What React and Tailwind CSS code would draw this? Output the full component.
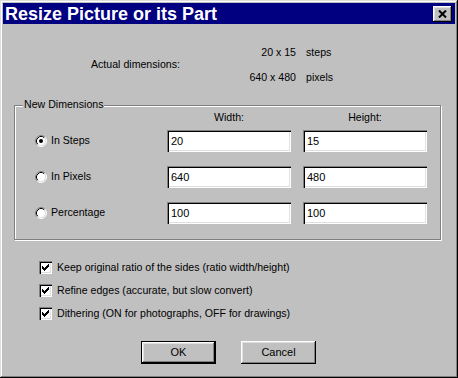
import React from 'react'

const font = { fontFamily: '"Liberation Sans", Arial, sans-serif' }

function Radio({ checked }) {
  // win95 style radio, 12x12
  return (
    <svg width="12" height="12" viewBox="0 0 12 12" className="shrink-0">
      <circle cx="6" cy="6" r="5" fill="#fff" />
      <path d="M2.11 9.89 A5.5 5.5 0 0 1 9.89 2.11" fill="none" stroke="#808080" strokeWidth="1" />
      <path d="M9.89 2.11 A5.5 5.5 0 0 1 2.11 9.89" fill="none" stroke="#fff" strokeWidth="1" />
      <path d="M2.82 9.18 A4.5 4.5 0 0 1 9.18 2.82" fill="none" stroke="#000" strokeWidth="1" />
      <path d="M9.18 2.82 A4.5 4.5 0 0 1 2.82 9.18" fill="none" stroke="#dfdfdf" strokeWidth="1" />
      {checked && <circle cx="6" cy="6" r="2" fill="#000" />}
    </svg>
  )
}

function Check() {
  const px = [
    [9, 3],
    [8, 4], [9, 4],
    [3, 5], [7, 5], [8, 5], [9, 5],
    [3, 6], [4, 6], [6, 6], [7, 6], [8, 6],
    [3, 7], [4, 7], [5, 7], [6, 7], [7, 7],
    [4, 8], [5, 8], [6, 8],
    [5, 9],
  ]
  return (
    <span className="w-[13px] h-[13px] shrink-0 bg-white shadow-[inset_1px_1px_#808080,inset_2px_2px_#000,inset_-1px_-1px_#fff,inset_-2px_-2px_#dfdfdf]">
      <svg width="13" height="13" viewBox="0 0 13 13" shapeRendering="crispEdges">
        {px.map(([x, y]) => (
          <rect key={x + '-' + y} x={x} y={y} width="1" height="1" fill="#000" />
        ))}
      </svg>
    </span>
  )
}

function Field({ value }) {
  return (
    <div className="w-[124px] h-[22px] bg-white flex items-center pl-[4px] text-[11px] text-black shadow-[inset_1px_1px_#808080,inset_2px_2px_#000,inset_-1px_-1px_#fff,inset_-2px_-2px_#dfdfdf]">
      {value}
    </div>
  )
}

function Button({ label, isDefault }) {
  return (
    <button
      className={
        'w-[75px] h-[23px] bg-[#c0c0c0] text-[11px] text-black flex items-center justify-center ' +
        (isDefault
          ? 'border border-black shadow-[inset_-1px_-1px_#000,inset_1px_1px_#fff,inset_-2px_-2px_#808080,inset_2px_2px_#dfdfdf]'
          : 'shadow-[inset_-1px_-1px_#000,inset_1px_1px_#fff,inset_-2px_-2px_#808080,inset_2px_2px_#dfdfdf]')
      }
    >
      {label}
    </button>
  )
}

const rows = [
  { label: 'In Steps', w: '20', h: '15', checked: true },
  { label: 'In Pixels', w: '640', h: '480' },
  { label: 'Percentage', w: '100', h: '100' },
]

const options = [
  'Keep original ratio of the sides (ratio width/height)',
  'Refine edges (accurate, but slow convert)',
  'Dithering (ON for photographs, OFF for drawings)',
]

export default function App() {
  return (
    <div
      style={font}
      className="w-[458px] h-[378px] bg-[#c0c0c0] p-[3px] flex flex-col text-black shadow-[inset_-1px_-1px_#000,inset_1px_1px_#dfdfdf,inset_-2px_-2px_#808080,inset_2px_2px_#fff]"
    >
      {/* title bar */}
      <div className="h-[21px] bg-[#000080] flex items-center justify-between pl-[2px]">
        <span className="text-white font-bold text-[18px] leading-none">Resize Picture or its Part</span>
        <span className="w-[19px] h-[16px] mr-[3px] bg-[#c0c0c0] flex items-center justify-center shadow-[inset_-1px_-1px_#000,inset_1px_1px_#fff,inset_-2px_-2px_#808080,inset_2px_2px_#dfdfdf]">
          <svg width="9" height="8" viewBox="0 0 9 8">
            <path d="M1 0.5 L8 7.5 M8 0.5 L1 7.5" stroke="#000" strokeWidth="2" />
          </svg>
        </span>
      </div>

      <div className="flex flex-col pl-[11px] text-[10.6px]">
        {/* actual dimensions */}
        <div className="mt-[16px] flex items-center">
          <span className="ml-[77px] w-[145px]">Actual dimensions:</span>
          <div className="flex flex-col">
            <div className="h-[25px] flex items-center">
              <span className="w-[60px] text-right">20 x 15</span>
              <span className="ml-[10px]">steps</span>
            </div>
            <div className="h-[25px] flex items-center">
              <span className="w-[60px] text-right">640 x 480</span>
              <span className="ml-[10px]">pixels</span>
            </div>
          </div>
        </div>

        {/* new dimensions group */}
        <div className="relative mt-[15px] w-[427px] h-[135px] border border-[#808080] shadow-[inset_1px_1px_#fff,1px_1px_#fff] pt-[5px]">
          <span className="absolute left-[8px] top-[-8px] px-[1px] bg-[#c0c0c0] leading-[13px]">New Dimensions</span>
          <div className="flex h-[14px] items-center pl-[152px] gap-[12px]">
            <span className="w-[124px] text-center">Width:</span>
            <span className="w-[124px] text-center">Height:</span>
          </div>
          <div className="mt-[5px] flex flex-col gap-[14px]">
            {rows.map(r => (
              <div key={r.label} className="flex items-center pl-[20px]">
                <div className="w-[132px] flex items-center gap-[4px]">
                  <Radio checked={r.checked} />
                  <span>{r.label}</span>
                </div>
                <div className="flex gap-[12px]">
                  <Field value={r.w} />
                  <Field value={r.h} />
                </div>
              </div>
            ))}
          </div>
        </div>

        {/* options */}
        <div className="mt-[16px] flex flex-col">
          {options.map(o => (
            <div key={o} className="h-[23px] flex items-center gap-[5px] ml-[25px]">
              <Check />
              <span>{o}</span>
            </div>
          ))}
        </div>

        {/* buttons */}
        <div className="mt-[16px] flex gap-[25px] ml-[127px]">
          <Button label="OK" isDefault />
          <Button label="Cancel" />
        </div>
      </div>
    </div>
  )
}
